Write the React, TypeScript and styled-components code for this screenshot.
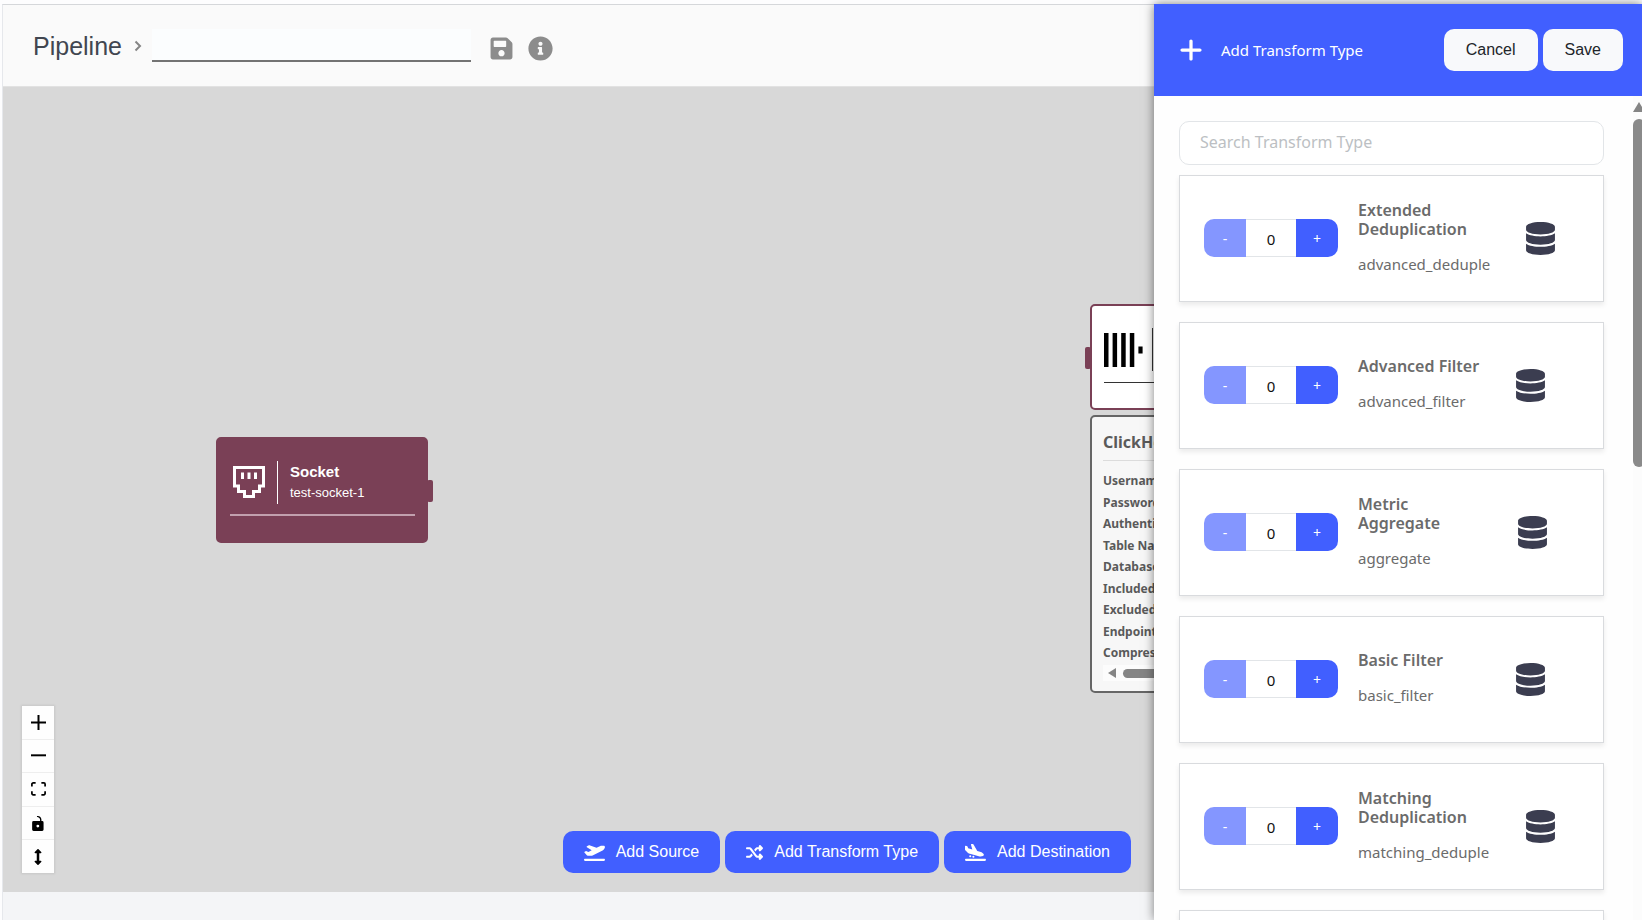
import React, { useState } from 'react';
import styled, { createGlobalStyle } from 'styled-components';
import { FaPlaneDeparture, FaPlaneArrival, FaShuffle, FaPlus } from 'react-icons/fa6';
import { FaArrowsAltV, FaDatabase, FaInfoCircle, FaSave } from 'react-icons/fa';

const sans = '"Liberation Sans", Arial, sans-serif';
const humanist = '"Noto Sans", "Open Sans", sans-serif';
const blue = '#415fff';
const plum = '#7a4056';

const GlobalStyle = createGlobalStyle`
  *, *::before, *::after { box-sizing: border-box; }
  body { margin: 0; background: #fff; font-family: ${sans}; }
  button, input { font: inherit; margin: 0; }
`;

const Page = styled.div`
  display: flex;
  height: 100vh;
  padding: 4px 0 0 2px;
  overflow: hidden;
  background: #fdfdfe;
`;

const Workspace = styled.main`
  flex: 1;
  min-width: 0;
  display: flex;
  flex-direction: column;
  border-top: 1px solid #d5d7da;
  border-left: 1px solid #e6e8ec;
  background: #f4f5f7;
  overflow: hidden;
`;

const TopBar = styled.header`
  display: flex;
  align-items: center;
  height: 82px;
  padding: 0 30px;
  background: #fafafa;
  border-bottom: 1px solid #e2e2e2;
`;

const Title = styled.h1`
  margin: 0;
  font-size: 25px;
  font-weight: 400;
  line-height: 30px;
  color: #414650;
`;

const Crumb = styled.svg`
  width: 8px;
  height: 12px;
  margin: 0 10px 0 12px;
  fill: none;
  stroke: #858585;
  stroke-width: 2;
`;

const NameInput = styled.input`
  width: 319px;
  height: 33px;
  padding: 0 8px;
  border: 0;
  border-bottom: 2px solid #737373;
  background: #fbfdfe;
  outline: none;
  font-size: 18px;
`;

const BarActions = styled.div`
  display: flex;
  align-items: center;
  gap: 14px;
  margin-left: 18px;
  padding-top: 5px;
`;

const IconButton = styled.button`
  display: flex;
  padding: 0;
  border: 0;
  background: none;
  color: #8c8c8c;
  font-size: 25px;
`;

const Canvas = styled.section`
  position: relative;
  flex: 1;
  margin-bottom: 28px;
  background: #d8d8d8;
  overflow: hidden;
`;

const Placed = styled.div<{ $x: number; $y: number }>`
  position: absolute;
  left: ${(p) => p.$x}px;
  top: ${(p) => p.$y}px;
  width: 212px;
`;

const NodeCard = styled.article<{ $filled?: boolean }>`
  position: relative;
  height: 106px;
  padding: 23px 11px 0 12px;
  border: 2px solid ${plum};
  border-radius: 5px;
  background: ${(p) => (p.$filled ? plum : '#fff')};
  color: ${(p) => (p.$filled ? '#fff' : '#333')};
`;

const NodeBody = styled.div<{ $filled?: boolean }>`
  display: flex;
  align-items: center;
  height: 54px;
  padding-bottom: 12px;
  border-bottom: ${(p) => (p.$filled ? '2px solid #c2a0ae' : '1px solid #333')};
`;

const NodeIcon = styled.div<{ $wide?: boolean }>`
  display: flex;
  width: ${(p) => (p.$wide ? 49 : 48)}px;
  height: 43px;
  padding-left: ${(p) => (p.$wide ? 0 : 3)}px;
  align-items: center;
  border-right: 1px solid currentColor;
`;

const NodeText = styled.div`
  padding-left: 12px;
`;

const NodeName = styled.div`
  font-size: 15px;
  font-weight: 700;
  line-height: 21px;
`;

const NodeId = styled.div`
  font-size: 13px;
  line-height: 22px;
`;

const Handle = styled.span<{ $side: 'left' | 'right' }>`
  position: absolute;
  top: 41px;
  ${(p) => p.$side}: -7px;
  width: 6px;
  height: 22px;
  border-radius: 2px;
  background: ${plum};
`;

const Details = styled.aside`
  height: 278px;
  margin-top: 5px;
  padding: 15px 11px 0;
  border: 2px solid #666;
  border-radius: 5px;
  background: #f7f7f7;
  font-family: ${humanist};
  color: #5a5a5a;
  overflow: hidden;
`;

const DetailsTitle = styled.h2`
  margin: 0 0 10px;
  padding-bottom: 8px;
  border-bottom: 1px solid #dcdcdc;
  font-size: 16px;
  font-weight: 700;
  line-height: 20px;
`;

const DetailsList = styled.ul`
  display: flex;
  flex-direction: column;
  justify-content: space-between;
  height: 192px;
  margin: 0 0 2px;
  padding: 0;
  list-style: none;
  font-size: 12px;
  font-weight: 700;
  line-height: 20px;
`;

const HorizontalRail = styled.div`
  display: flex;
  align-items: center;
  gap: 7px;
  height: 16px;
  padding-left: 5px;
  background: #fcfcfc;
`;

const HorizontalThumb = styled.span`
  width: 110px;
  height: 9px;
  border-radius: 5px;
  background: #858585;
`;

const Controls = styled.div`
  position: absolute;
  left: 19px;
  bottom: 19px;
  display: flex;
  flex-direction: column;
  width: 32px;
  height: 167px;
  background: #fff;
  box-shadow: 0 0 2px 1px rgba(0, 0, 0, 0.08);
`;

const ControlButton = styled.button`
  flex: 1;
  display: flex;
  align-items: center;
  justify-content: center;
  padding: 0;
  border: 0;
  border-bottom: 1px solid #eee;
  background: #fefefe;
  color: #000;
  font-size: 16px;

  &:last-child { border-bottom: 0; }
`;

const Actions = styled.div`
  position: absolute;
  right: 23px;
  bottom: 19px;
  display: flex;
  gap: 5px;
`;

const ActionButton = styled.button`
  display: flex;
  align-items: center;
  gap: 11px;
  height: 42px;
  padding: 0 21px;
  border: 0;
  border-radius: 10px;
  background: ${blue};
  color: #fff;
  font-size: 16px;
  white-space: nowrap;
`;

const Drawer = styled.aside`
  position: relative;
  z-index: 2;
  display: flex;
  flex-direction: column;
  width: 488px;
  background: #fefefe;
  box-shadow: 0 0 10px rgba(0, 0, 0, 0.5);
  font-family: ${humanist};
`;

const DrawerHeader = styled.header`
  display: flex;
  align-items: center;
  flex: none;
  height: 92px;
  padding: 0 19px 0 24px;
  background: ${blue};
  color: #fff;
`;

const DrawerTitle = styled.h2`
  flex: 1;
  margin: 0 0 0 17px;
  font-size: 15px;
  font-weight: 400;
`;

const DrawerButtons = styled.div`
  display: flex;
  gap: 5px;
`;

const LightButton = styled.button`
  height: 42px;
  padding: 0 22px;
  border: 0;
  border-radius: 10px;
  background: #f8f9fb;
  color: #212529;
  font-family: ${sans};
  font-size: 16px;
`;

const DrawerBody = styled.div`
  display: flex;
  flex: 1;
  min-height: 0;
`;

const DrawerContent = styled.div`
  flex: 1;
  min-width: 0;
  padding: 25px 29px 0 25px;
  overflow: hidden;
`;

const SearchInput = styled.input`
  display: block;
  width: 100%;
  height: 44px;
  margin-bottom: 10px;
  padding: 0 20px 2px;
  border: 1px solid #e2e5e8;
  border-radius: 10px;
  background: #fff;
  color: #333;
  font-size: 16px;
  outline: none;

  &::placeholder { color: #bcbfc3; opacity: 1; }
`;

const CardList = styled.ul`
  display: flex;
  flex-direction: column;
  gap: 20px;
  margin: 0;
  padding: 0;
  list-style: none;
`;

const Card = styled.li`
  display: flex;
  align-items: center;
  height: 127px;
  padding: 0 24px 1px;
  border: 1px solid #d9dbde;
  background: #fff;
  box-shadow: 0 3px 5px rgba(0, 0, 0, 0.08);
`;

const Stepper = styled.div`
  display: flex;
  flex: none;
  height: 38px;
  border-radius: 10px;
  overflow: hidden;
`;

const StepButton = styled.button`
  width: 42px;
  padding: 0;
  border: 0;
  background: ${blue};
  color: #fff;
  font-size: 14px;

  &:disabled { background: #8496ff; }
`;

const StepValue = styled.input`
  width: 50px;
  padding: 2px 0 0;
  border: 1px solid #e2e5e8;
  border-width: 1px 0;
  background: #fff;
  color: #111;
  font-size: 15px;
  text-align: center;
  outline: none;
`;

const CardText = styled.div<{ $width: number }>`
  flex: none;
  width: ${(p) => p.$width}px;
  margin: 0 32px 0 20px;
  color: #6b6b6b;
`;

const CardTitle = styled.h3`
  margin: 0 0 13px;
  font-size: 16px;
  font-weight: 600;
  line-height: 19px;
`;

const CardCode = styled.p`
  margin: 0;
  font-size: 15px;
  line-height: 24px;
`;

const VerticalRail = styled.div`
  flex: none;
  width: 9px;
  padding-top: 6px;
  background: #fcfcfc;
  overflow: hidden;
`;

const RailArrow = styled.svg`
  display: block;
  fill: #858585;
`;

const VerticalThumb = styled.div`
  width: 12px;
  height: 348px;
  margin-top: 7px;
  border-radius: 6px;
  background: #8a8a8a;
`;

const EthernetIcon = () => (
  <svg width="32" height="32" viewBox="0 0 32 32" fill="none" aria-hidden="true">
    <path
      d="M1.5 1.5H30.5V20H26.5V25.5H20.5V30.5H11.5V25.5H5.5V20H1.5Z"
      stroke="#fff"
      strokeWidth="3"
    />
    <path d="M8 6.5h3v6.5H8zM14.5 6.5h3v6.5h-3zM21 6.5h3v6.5h-3z" fill="#fff" />
  </svg>
);

const ClickHouseIcon = () => (
  <svg width="39" height="34" viewBox="0 0 39 34" fill="#000" aria-hidden="true">
    <path d="M0 0h4.5v34H0zM8.6 0h4.5v34H8.6zM17.2 0h4.5v34h-4.5zM25.8 0h4.5v34h-4.5zM34.4 13.5h4.2v7h-4.2z" />
  </svg>
);

const ZoomInIcon = () => (
  <svg width="15" height="15" viewBox="0 0 32 32" aria-hidden="true">
    <path d="M32 18.133H18.133V32h-4.266V18.133H0v-4.266h13.867V0h4.266v13.867H32z" />
  </svg>
);

const ZoomOutIcon = () => (
  <svg width="15" height="3" viewBox="0 0 32 5" aria-hidden="true">
    <path d="M0 0h32v4.2H0z" />
  </svg>
);

const FitIcon = () => (
  <svg width="15" height="14" viewBox="0 0 32 30" aria-hidden="true">
    <path d="M3.692 4.63c0-.53.4-.938.939-.938h5.215V0H4.708C2.13 0 0 2.054 0 4.63v5.216h3.692V4.631zM27.354 0h-5.2v3.692h5.17c.53 0 .984.4.984.939v5.215H32V4.631A4.624 4.624 0 0027.354 0zm.954 24.83c0 .532-.4.94-.939.94h-5.215v3.768h5.215c2.577 0 4.631-2.13 4.631-4.707v-5.139h-3.692v5.139zm-23.677.94c-.531 0-.939-.4-.939-.94v-5.138H0v5.139c0 2.577 2.13 4.707 4.708 4.707h5.138V25.77H4.631z" />
  </svg>
);

const UnlockIcon = () => (
  <svg width="12" height="15" viewBox="0 0 25 32" aria-hidden="true">
    <path d="M21.333 10.667H19.81V7.619C19.81 3.429 16.38 0 12.19 0c-4.114 1.828-1.37 2.133.305 2.438 1.676.305 4.42 2.59 4.42 5.181v3.048H3.047A3.056 3.056 0 000 13.714v15.238A3.056 3.056 0 003.048 32h18.285a3.056 3.056 0 003.048-3.048V13.714a3.056 3.056 0 00-3.048-3.047zM12.19 24.533a3.056 3.056 0 01-3.047-3.047 3.056 3.056 0 013.047-3.048 3.056 3.056 0 013.048 3.048 3.056 3.056 0 01-3.048 3.047z" />
  </svg>
);

const details = [
  'Username',
  'Password',
  'Authentication',
  'Table Name',
  'Database',
  'Included',
  'Excluded',
  'Endpoint',
  'Compression',
];

const transforms = [
  { title: 'Extended Deduplication', code: 'advanced_deduple', width: 134 },
  { title: 'Advanced Filter', code: 'advanced_filter', width: 124 },
  { title: 'Metric Aggregate', code: 'aggregate', width: 126 },
  { title: 'Basic Filter', code: 'basic_filter', width: 124 },
  { title: 'Matching Deduplication', code: 'matching_deduple', width: 134 },
  { title: '', code: '', width: 134 },
];

function TransformCard({ title, code, width }: { title: string; code: string; width: number }) {
  const [count, setCount] = useState(0);
  return (
    <Card>
      <Stepper>
        <StepButton aria-label={`Remove ${title}`} disabled={count === 0} onClick={() => setCount(count - 1)}>
          -
        </StepButton>
        <StepValue aria-label={`${title} count`} value={count} readOnly />
        <StepButton aria-label={`Add ${title}`} onClick={() => setCount(count + 1)}>
          +
        </StepButton>
      </Stepper>
      <CardText $width={width}>
        <CardTitle>{title}</CardTitle>
        <CardCode>{code}</CardCode>
      </CardText>
      <FaDatabase size={33} color="#3b3d50" />
    </Card>
  );
}

export default function App() {
  return (
    <>
      <GlobalStyle />
      <Page>
        <Workspace>
          <TopBar>
            <Title>Pipeline</Title>
            <Crumb viewBox="0 0 8 12" aria-hidden="true">
              <path d="M1.5 1.5L6 6l-4.500 4.500" />
            </Crumb>
            <NameInput aria-label="Pipeline name" />
            <BarActions>
              <IconButton aria-label="Save pipeline"><FaSave /></IconButton>
              <IconButton aria-label="Pipeline info"><FaInfoCircle /></IconButton>
            </BarActions>
          </TopBar>
          <Canvas>
            <Placed $x={213} $y={350}>
              <NodeCard $filled>
                <NodeBody $filled>
                  <NodeIcon><EthernetIcon /></NodeIcon>
                  <NodeText>
                    <NodeName>Socket</NodeName>
                    <NodeId>test-socket-1</NodeId>
                  </NodeText>
                </NodeBody>
                <Handle $side="right" />
              </NodeCard>
            </Placed>
            <Placed $x={1087} $y={217}>
              <NodeCard>
                <NodeBody>
                  <NodeIcon $wide><ClickHouseIcon /></NodeIcon>
                </NodeBody>
                <Handle $side="left" />
              </NodeCard>
              <Details>
                <DetailsTitle>ClickHouse</DetailsTitle>
                <DetailsList>
                  {details.map((d) => <li key={d}>{d}</li>)}
                </DetailsList>
                <HorizontalRail>
                  <RailArrow width="8" height="10" viewBox="0 0 8 10"><path d="M8 0v10L0 5z" /></RailArrow>
                  <HorizontalThumb />
                </HorizontalRail>
              </Details>
            </Placed>
            <Controls>
              <ControlButton aria-label="Zoom in"><ZoomInIcon /></ControlButton>
              <ControlButton aria-label="Zoom out"><ZoomOutIcon /></ControlButton>
              <ControlButton aria-label="Fit view"><FitIcon /></ControlButton>
              <ControlButton aria-label="Toggle lock"><UnlockIcon /></ControlButton>
              <ControlButton aria-label="Align vertically"><FaArrowsAltV /></ControlButton>
            </Controls>
            <Actions>
              <ActionButton><FaPlaneDeparture size={21} />Add Source</ActionButton>
              <ActionButton><FaShuffle size={17} />Add Transform Type</ActionButton>
              <ActionButton><FaPlaneArrival size={21} />Add Destination</ActionButton>
            </Actions>
          </Canvas>
        </Workspace>
        <Drawer>
          <DrawerHeader>
            <FaPlus size={26} />
            <DrawerTitle>Add Transform Type</DrawerTitle>
            <DrawerButtons>
              <LightButton>Cancel</LightButton>
              <LightButton>Save</LightButton>
            </DrawerButtons>
          </DrawerHeader>
          <DrawerBody>
            <DrawerContent>
              <SearchInput aria-label="Search Transform Type" placeholder="Search Transform Type" />
              <CardList>
                {transforms.map((t, i) => <TransformCard key={i} {...t} />)}
              </CardList>
            </DrawerContent>
            <VerticalRail>
              <RailArrow width="12" height="10" viewBox="0 0 12 10"><path d="M6 0l6 10H0z" /></RailArrow>
              <VerticalThumb />
            </VerticalRail>
          </DrawerBody>
        </Drawer>
      </Page>
    </>
  );
}
